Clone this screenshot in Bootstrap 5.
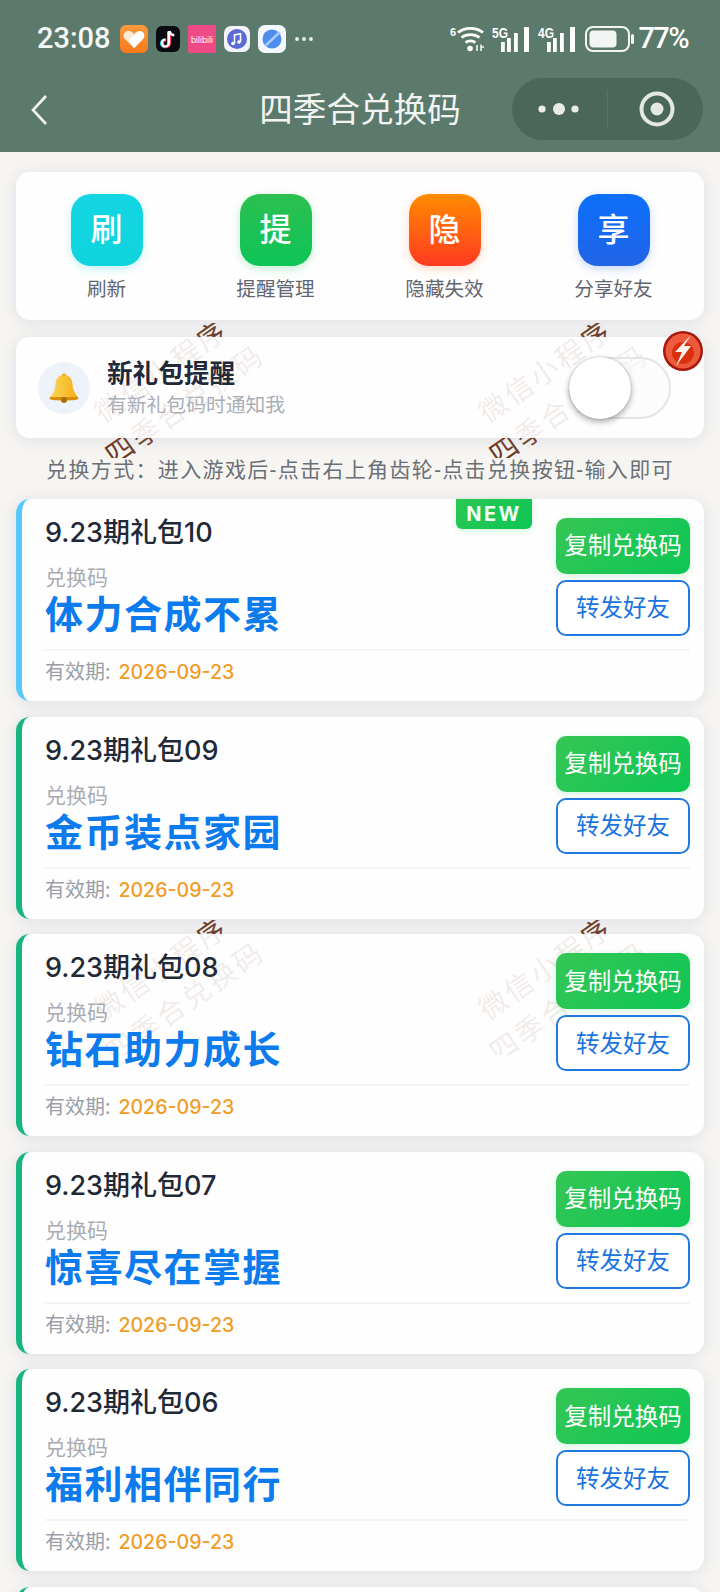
<!doctype html>
<html lang="zh">
<head>
<meta charset="utf-8">
<title>四季合兑换码</title>
<link href="https://cdn.jsdelivr.net/npm/bootstrap@5.3.0/dist/css/bootstrap.min.css" rel="stylesheet">
<style>
html,body{height:1592px;overflow:hidden}
body{background:#f7f5f2;font-family:"Noto Sans","Noto Sans CJK SC",sans-serif;color:#1f2937;position:relative}
.top-head{background:#5c7a6b;height:152px;color:#fff}
.stat-row{height:78px;padding:0 32px 0 37px}
.stat-time{font-family:Roboto,sans-serif;font-size:29px;font-weight:500;margin-right:9px;color:#f4f7f5}
.stat-pct{font-family:Roboto,sans-serif;font-size:29px;font-weight:500;letter-spacing:-1.6px;margin-left:3px}
.nav-row{height:74px;padding:0 17px 0 30px;position:relative}
.nav-ttl{position:absolute;left:0;right:0;top:6px;text-align:center;font-size:33.6px;line-height:50px;color:#f1f4f2;font-weight:400}
.capsule{width:191px;height:62px;border-radius:31px;background:#4b6759;position:relative}
.capsule-line{width:1px;height:38px;background:#587465}
.main-wrap{padding:20px 16px 0;position:relative;z-index:1}
.sheet{background:rgba(255,255,255,.9);border:0;border-radius:14px;box-shadow:0 2px 16px rgba(130,145,190,.22)}
.tool-panel{height:148px;padding:22px 6px 0}
.tool-sq{width:72px;height:72px;border-radius:20px;color:#fff;font-size:32px;font-weight:500;line-height:70px;text-align:center}
.tool-lbl{font-size:19.6px;line-height:28px;color:#5f6670;margin-top:9px;text-align:center}
.sq-a{background:linear-gradient(180deg,#13d6e3,#10d4dc);box-shadow:0 3px 10px rgba(16,212,220,.25)}
.sq-b{background:linear-gradient(180deg,#2cc050,#0dc458);box-shadow:0 3px 10px rgba(16,196,88,.25)}
.sq-c{background:linear-gradient(180deg,#ff8c00,#ff3a22);box-shadow:0 3px 10px rgba(255,100,20,.25)}
.sq-d{background:linear-gradient(180deg,#0b6ffa,#2264e6);box-shadow:0 3px 10px rgba(30,110,240,.25)}
.remind-panel{height:101px;margin-top:17px;padding:0 33px 0 22px;position:relative}
.bell-disc{width:52px;height:52px;border-radius:50%;background:#eef3fb;margin-right:17px}
.remind-ttl{font-size:25.6px;font-weight:700;line-height:34px;color:#1f2937}
.remind-sub{font-size:19.8px;line-height:28px;color:#a9afb7}
.tog-track{width:102px;height:62px;border-radius:31px;border:2px solid #e4e4e4;background:rgba(250,250,250,.6);position:relative}
.tog-knob{position:absolute;left:-2px;top:-2px;width:62px;height:62px;border-radius:50%;background:#fff;box-shadow:0 3px 6px rgba(0,0,0,.32),0 0 2px rgba(0,0,0,.25)}
.flash-mark{position:absolute;right:0;top:-7px;width:42px;height:42px}
.how-line{font-size:21px;line-height:30px;letter-spacing:1.35px;color:#6b7077;text-align:center;margin:16px 0 15px;white-space:nowrap}
.gift-card{height:202px;margin-bottom:15.6px;padding:18px 14px 0 23px;border-left:6px solid #17b582;position:relative}
.gift-card.is-new{border-left-color:#5ac8fa}
.gift-ttl{font-family:Inter,"Noto Sans CJK SC",sans-serif;font-size:27px;line-height:32px;font-weight:500;color:#1f2937}
.gift-lbl{font-size:21px;line-height:28px;margin-top:14px;color:#a9adb3}
.gift-code{font-size:38px;line-height:44px;font-weight:700;letter-spacing:1.5px;color:#0b7bee}
.btn-stack{width:134px;margin-top:1px}
.btn-copy{height:56px;width:134px;padding:0;border:0;border-radius:10px;color:#fff;font-size:23.5px;background:linear-gradient(135deg,#36c655,#0dc655);box-shadow:0 2px 8px rgba(20,200,90,.2)}
.btn-copy:hover{color:#fff}
.btn-share{height:56px;width:134px;padding:0;margin-top:6px;border:2px solid #2079e0;border-radius:10px;color:#1a74df;font-size:23.5px;background:#fff}
.gift-foot{border-top:2px solid #f3f4f6;margin-top:13px;padding-top:7px;font-size:20px;line-height:28px;color:#9a9ea6}
.gift-date{font-family:Inter,sans-serif;color:#f09c26;font-weight:500;margin-left:8px;font-size:19.6px}
.new-flag{position:absolute;left:434px;top:0;width:76px;height:30px;border-radius:0 0 6px 6px;background:linear-gradient(135deg,#2cc653,#0dc655);color:#f2fff6;font-size:20px;font-weight:700;letter-spacing:2.4px;line-height:30px;text-align:center;font-family:Inter,sans-serif;box-shadow:0 2px 6px rgba(20,200,90,.2)}
.mark-box{position:absolute;width:210px;height:135px;overflow:hidden;z-index:0}
.mark-inner{position:absolute;left:50%;top:50%;width:280px;text-align:center;transform:translate(-50%,-54%) rotate(-35deg);color:#6d3a20;font-size:28px;line-height:41px;letter-spacing:3px;white-space:nowrap}
.m1{left:68px;top:323px}.m2{left:452px;top:323px}.m3{left:68px;top:920px}.m4{left:452px;top:920px}
</style>
</head>
<body>
<div class="mark-box m1"><div class="mark-inner">微信小程序<br>四季合兑换码</div></div>
<div class="mark-box m2"><div class="mark-inner">微信小程序<br>四季合兑换码</div></div>
<div class="mark-box m3"><div class="mark-inner">微信小程序<br>四季合兑换码</div></div>
<div class="mark-box m4"><div class="mark-inner">微信小程序<br>四季合兑换码</div></div>

<header class="top-head">
  <div class="stat-row d-flex align-items-center justify-content-between">
    <div class="d-flex align-items-center">
      <span class="stat-time">23:08</span>
      <svg width="28" height="28" viewBox="0 0 28 28" class="me-2"><defs><linearGradient id="o1" x1="0" y1="0" x2="0" y2="1"><stop offset="0" stop-color="#f99a3c"/><stop offset="1" stop-color="#f57a1c"/></linearGradient></defs><rect width="28" height="28" rx="6" fill="url(#o1)"/><path d="M14 23 5 14c-3-3-1-8 3.500-8 2.500 0 4.500 1.500 5.500 3.500C15 7.500 17 6 19.500 6 24 6 26 11 23 14z" fill="#fde9d8"/><path d="M14 23 9 15l7-6c1-1 3.500-3 5-2.500 3.500 1 4 5 2 7.500z" fill="#fff"/></svg>
      <svg width="24" height="26" viewBox="0 0 24 26" class="me-2"><rect width="24" height="26" rx="6" fill="#0b0b12"/><path d="M13 5v12a3.500 3.500 0 1 1-3.500-3.500" fill="none" stroke="#2af0ea" stroke-width="2.600" transform="translate(-.7 .4)"/><path d="M13 5v12a3.500 3.500 0 1 1-3.500-3.500" fill="none" stroke="#fe2c55" stroke-width="2.600" transform="translate(.7 .4)"/><path d="M13 5v12a3.500 3.500 0 1 1-3.500-3.500" fill="none" stroke="#fff" stroke-width="2.200"/><path d="M13.500 5c.5 2.500 2.300 4 4.800 4.300" fill="none" stroke="#fff" stroke-width="2.400"/></svg>
      <svg width="28" height="28" viewBox="0 0 28 28" class="me-2"><rect width="28" height="28" rx="2" fill="#ee4b86"/><text x="14" y="18" font-size="9" font-family="Liberation Sans" fill="#fff" text-anchor="middle" textLength="22" lengthAdjust="spacingAndGlyphs">bilibili</text></svg>
      <svg width="26" height="26" viewBox="0 0 26 26" class="me-2"><rect width="26" height="26" rx="7" fill="#f2f4fa"/><circle cx="13" cy="13" r="10" fill="#5a6bd6"/><path d="M10.500 17.500V9l6-1.200v8" fill="none" stroke="#fff" stroke-width="1.600"/><circle cx="9" cy="17.500" r="1.800" fill="#fff"/><circle cx="15" cy="16" r="1.800" fill="#fff"/></svg>
      <svg width="28" height="28" viewBox="0 0 28 28"><rect width="28" height="28" rx="7" fill="#f4f7fd"/><circle cx="14" cy="14" r="9.500" fill="#4f8cf0"/><path d="M7 21 22 7" stroke="#a7ccf8" stroke-width="2.500"/></svg>
      <svg width="20" height="6" viewBox="0 0 20 6" class="ms-2"><circle cx="3" cy="3" r="1.900" fill="#e8eeea"/><circle cx="10" cy="3" r="1.900" fill="#e8eeea"/><circle cx="17" cy="3" r="1.900" fill="#e8eeea"/></svg>
    </div>
    <div class="d-flex align-items-center">
      <svg width="36" height="26" viewBox="0 0 36 26" style="margin-right:6px" fill="none" stroke="#fff"><text x="0" y="10" font-size="11" font-weight="700" font-family="Liberation Sans" fill="#fff" stroke="none">6</text><path d="M8 6.500c7-5.500 18-5.500 25 0" stroke-width="2.800"/><path d="M11.500 11.500c5-3.800 13-3.800 18 0" stroke-width="2.800"/><path d="M15.500 16.500c2.800-2 7-2 9.800 0" stroke-width="2.800"/><circle cx="20" cy="22.500" r="2.800" fill="#fff" stroke="none"/><path d="M27 25v-6M31 18.500v6.500M34 21h-3" stroke-width="1.600" opacity=".9"/></svg>
      <svg width="38" height="26" viewBox="0 0 38 26" style="margin-right:8px"><text x="0" y="12" font-size="14" font-weight="700" font-family="Liberation Sans" textLength="16" lengthAdjust="spacingAndGlyphs" fill="#fff">5G</text><g fill="#fff"><rect x="9" y="16" width="3.800" height="10"/><rect x="15" y="12" width="3.800" height="14"/><rect x="22" y="7" width="3.800" height="19"/><rect x="32" y="1" width="5" height="25"/></g></svg>
      <svg width="38" height="26" viewBox="0 0 38 26" style="margin-right:9px"><text x="0" y="12" font-size="14" font-weight="700" font-family="Liberation Sans" textLength="16" lengthAdjust="spacingAndGlyphs" fill="#fff">4G</text><g fill="#fff"><rect x="9" y="16" width="3.800" height="10"/><rect x="15" y="12" width="3.800" height="14"/><rect x="22" y="7" width="3.800" height="19"/><rect x="32" y="1" width="5" height="25"/></g></svg>
      <svg width="50" height="26" viewBox="0 0 50 26"><rect x="1" y="1" width="43" height="24" rx="7" fill="none" stroke="#f2f5f3" stroke-width="2"/><rect x="4.500" y="4.500" width="27" height="17" rx="4" fill="#f2f5f3"/><rect x="46" y="8" width="3" height="10" rx="1.500" fill="#f2f5f3"/></svg>
      <span class="stat-pct">77%</span>
    </div>
  </div>
  <div class="nav-row d-flex justify-content-between align-items-start">
    <svg width="18" height="32" viewBox="0 0 18 32" class="mt-3" fill="none" stroke="#f1f4f2" stroke-width="2.600"><path d="M16 2 3 16l13 14"/></svg>
    <div class="nav-ttl">四季合兑换码</div>
    <div class="capsule d-flex align-items-center">
      <svg width="95" height="62" viewBox="0 0 95 62"><circle cx="30" cy="31" r="3.600" fill="#e9ece9"/><circle cx="47" cy="31" r="6" fill="#e9ece9"/><circle cx="63" cy="31" r="3.600" fill="#e9ece9"/></svg>
      <div class="capsule-line"></div>
      <svg width="95" height="62" viewBox="0 0 95 62"><circle cx="49" cy="31" r="15.500" fill="none" stroke="#e4e7e4" stroke-width="4"/><circle cx="49" cy="31" r="6.500" fill="#e4e7e4"/></svg>
    </div>
  </div>
</header>

<main class="main-wrap">
  <section class="card sheet tool-panel">
    <div class="row g-0">
      <div class="col-3 d-flex flex-column align-items-center"><div class="tool-sq sq-a">刷</div><div class="tool-lbl">刷新</div></div>
      <div class="col-3 d-flex flex-column align-items-center"><div class="tool-sq sq-b">提</div><div class="tool-lbl">提醒管理</div></div>
      <div class="col-3 d-flex flex-column align-items-center"><div class="tool-sq sq-c">隐</div><div class="tool-lbl">隐藏失效</div></div>
      <div class="col-3 d-flex flex-column align-items-center"><div class="tool-sq sq-d">享</div><div class="tool-lbl">分享好友</div></div>
    </div>
  </section>

  <section class="card sheet remind-panel d-flex flex-row align-items-center justify-content-between">
    <div class="d-flex align-items-center">
      <div class="bell-disc d-flex align-items-center justify-content-center">
        <svg width="32" height="32" viewBox="0 0 32 32"><defs><linearGradient id="b1" x1="0" y1="0" x2="1" y2="0"><stop offset="0" stop-color="#fbd75a"/><stop offset="1" stop-color="#f2ae14"/></linearGradient></defs><circle cx="16" cy="4" r="2.500" fill="#e3a514"/><path d="M16 3c6 0 8 4 8.500 9 .5 6 2 9 5.500 13H2c3.500-4 5-7 5.500-13C8 7 10 3 16 3z" fill="url(#b1)"/><path d="M2 25h28l.5 2c-4 2-25 2-29 0z" fill="#d98d0a"/><circle cx="16" cy="28" r="3" fill="#a8700a"/></svg>
      </div>
      <div>
        <div class="remind-ttl">新礼包提醒</div>
        <div class="remind-sub">有新礼包码时通知我</div>
      </div>
    </div>
    <div class="tog-track"><div class="tog-knob"></div></div>
    <svg class="flash-mark" viewBox="0 0 42 42"><circle cx="21" cy="21" r="20" fill="#a8180e"/><circle cx="21" cy="21" r="17.500" fill="#ee5a3c"/><circle cx="21" cy="23" r="11" fill="#d9300f"/><path d="M29 5 13 22h7l-6 14 15-20h-7z" fill="#fff4ee"/></svg>
  </section>

  <p class="how-line">兑换方式：进入游戏后-点击右上角齿轮-点击兑换按钮-输入即可</p>

  <article class="card sheet gift-card is-new">
    <div class="new-flag">NEW</div>
    <div class="d-flex justify-content-between">
      <div><div class="gift-ttl">9.23期礼包10</div><div class="gift-lbl">兑换码</div><div class="gift-code">体力合成不累</div></div>
      <div class="btn-stack"><button class="btn btn-copy">复制兑换码</button><button class="btn btn-share">转发好友</button></div>
    </div>
    <div class="gift-foot">有效期:<span class="gift-date">2026-09-23</span></div>
  </article>
  <article class="card sheet gift-card">
    <div class="d-flex justify-content-between">
      <div><div class="gift-ttl">9.23期礼包09</div><div class="gift-lbl">兑换码</div><div class="gift-code">金币装点家园</div></div>
      <div class="btn-stack"><button class="btn btn-copy">复制兑换码</button><button class="btn btn-share">转发好友</button></div>
    </div>
    <div class="gift-foot">有效期:<span class="gift-date">2026-09-23</span></div>
  </article>
  <article class="card sheet gift-card">
    <div class="d-flex justify-content-between">
      <div><div class="gift-ttl">9.23期礼包08</div><div class="gift-lbl">兑换码</div><div class="gift-code">钻石助力成长</div></div>
      <div class="btn-stack"><button class="btn btn-copy">复制兑换码</button><button class="btn btn-share">转发好友</button></div>
    </div>
    <div class="gift-foot">有效期:<span class="gift-date">2026-09-23</span></div>
  </article>
  <article class="card sheet gift-card">
    <div class="d-flex justify-content-between">
      <div><div class="gift-ttl">9.23期礼包07</div><div class="gift-lbl">兑换码</div><div class="gift-code">惊喜尽在掌握</div></div>
      <div class="btn-stack"><button class="btn btn-copy">复制兑换码</button><button class="btn btn-share">转发好友</button></div>
    </div>
    <div class="gift-foot">有效期:<span class="gift-date">2026-09-23</span></div>
  </article>
  <article class="card sheet gift-card">
    <div class="d-flex justify-content-between">
      <div><div class="gift-ttl">9.23期礼包06</div><div class="gift-lbl">兑换码</div><div class="gift-code">福利相伴同行</div></div>
      <div class="btn-stack"><button class="btn btn-copy">复制兑换码</button><button class="btn btn-share">转发好友</button></div>
    </div>
    <div class="gift-foot">有效期:<span class="gift-date">2026-09-23</span></div>
  </article>
  <article class="card sheet gift-card"></article>
</main>
<script src="https://cdn.jsdelivr.net/npm/bootstrap@5.3.0/dist/js/bootstrap.bundle.min.js"></script>
</body>
</html>
